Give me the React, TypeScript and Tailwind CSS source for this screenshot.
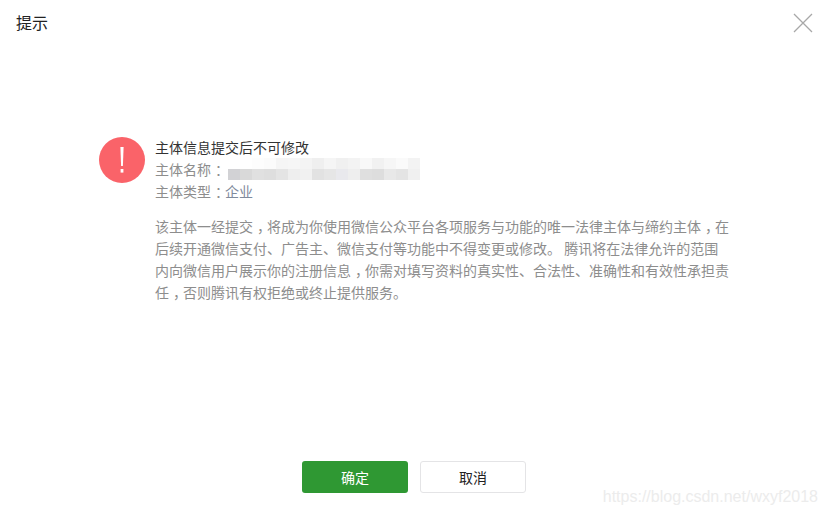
import React from 'react';

const FONT = "font-['Noto_Sans_CJK_SC','Liberation_Sans',sans-serif]";

// mosaic cells over the blurred company name
const mosaicTop = ['#ffffff', '#ffffff', '#fdfdfd', '#fbfbfb', '#f5f5f5', '#f6f6f6', '#f4f4f4', '#efefef', '#f5f5f5', '#f0f0f0', '#f3f3f3', '#f8f8f8', '#f1f1f1', '#f6f6f6', '#fafafa', '#f3f3f3'];
const mosaicBottom = ['#d2d2d5', '#d9d9d9', '#e0e0e0', '#dedede', '#e4e4e4', '#eeeeee', '#f1f1f1', '#e2e2e2', '#e6e6e6', '#e9e9ed', '#eeeeee', '#dfdfdf', '#dddddd', '#e8e8e8', '#e4e4e4', '#f0f0f0'];

const Mosaic: React.FC = () => (
  <div className="ml-[3px] flex flex-col">
    {[mosaicTop, mosaicBottom].map((row, i) => (
      <div key={i} className="flex">
        {row.map((color, j) => (
          <span key={j} className="h-[11px] w-3" style={{ backgroundColor: color }} />
        ))}
      </div>
    ))}
  </div>
);

// comma and colon sit in the middle of their cell in the screenshot
const P: React.FC<{ children: React.ReactNode }> = ({ children }) => (
  <span className="pl-[4px] pr-[3px] [font-feature-settings:'halt']">{children}</span>
);

export default function App() {
  return (
    <div className={`relative flex h-[513px] w-[827px] flex-col overflow-hidden bg-white ${FONT}`}>
      <header className="flex h-[44px] items-center justify-between pl-4 pr-[14px]">
        <h1 className="text-base text-[#222222]">提示</h1>
        <button className="mt-0.5 text-[#a8a8a8]">
          <svg width="20" height="20" viewBox="0 0 20 20" fill="none" stroke="currentColor" strokeWidth="1.3">
            <path d="M1 1L19 19M19 1L1 19" />
          </svg>
        </button>
      </header>

      <main className="flex flex-1 flex-col pl-[99px] pr-[97px] pt-[93px]">
        <div className="flex gap-[10px]">
          <div className="flex h-[46px] w-[46px] shrink-0 items-center justify-center rounded-full bg-[#fa6369]">
            <svg width="4" height="26" viewBox="0 0 4 26" fill="white">
              <path d="M0.4 0H3.6L2.9 19H1.1Z" />
              <rect x="0.6" y="22" width="2.8" height="3.6" />
            </svg>
          </div>
          <div className="-mt-[1px] text-sm leading-[22px] text-[#8d8d8d]">
            <p className="text-[#333333]">主体信息提交后不可修改</p>
            <div className="flex items-center">
              <span>主体名称<P>：</P></span>
              <Mosaic />
            </div>
            <p>
              主体类型<P>：</P><span className="text-[#7f8a9c]">企业</span>
            </p>
          </div>
        </div>
        <p className="ml-[56px] mt-[13px] w-[576px] text-sm leading-[22px] text-[#8d8d8d]">
          <span className="block">该主体一经提交<P>，</P>将成为你使用微信公众平台各项服务与功能的唯一法律主体与缔约主体<P>，</P>在</span>
          <span className="block">后续开通微信支付、广告主、微信支付等功能中不得变更或修改。 腾讯将在法律允许的范围</span>
          <span className="block">内向微信用户展示你的注册信息<P>，</P>你需对填写资料的真实性、合法性、准确性和有效性承担责</span>
          <span className="block">任<P>，</P>否则腾讯有权拒绝或终止提供服务。</span>
        </p>
      </main>

      <footer className="flex justify-center gap-3 pb-5 pl-[1px]">
        <button className="h-8 w-[106px] rounded-[3px] bg-[#2f9833] text-sm text-white">确定</button>
        <button className="h-8 w-[106px] rounded-[3px] border border-[#e4e4e6] bg-white text-sm text-[#222222]">取消</button>
      </footer>

      <span className="absolute bottom-[4px] right-[9px] font-['Liberation_Sans',sans-serif] text-base text-[#ececec]">
        https://blog.csdn.net/wxyf2018
      </span>
    </div>
  );
}
